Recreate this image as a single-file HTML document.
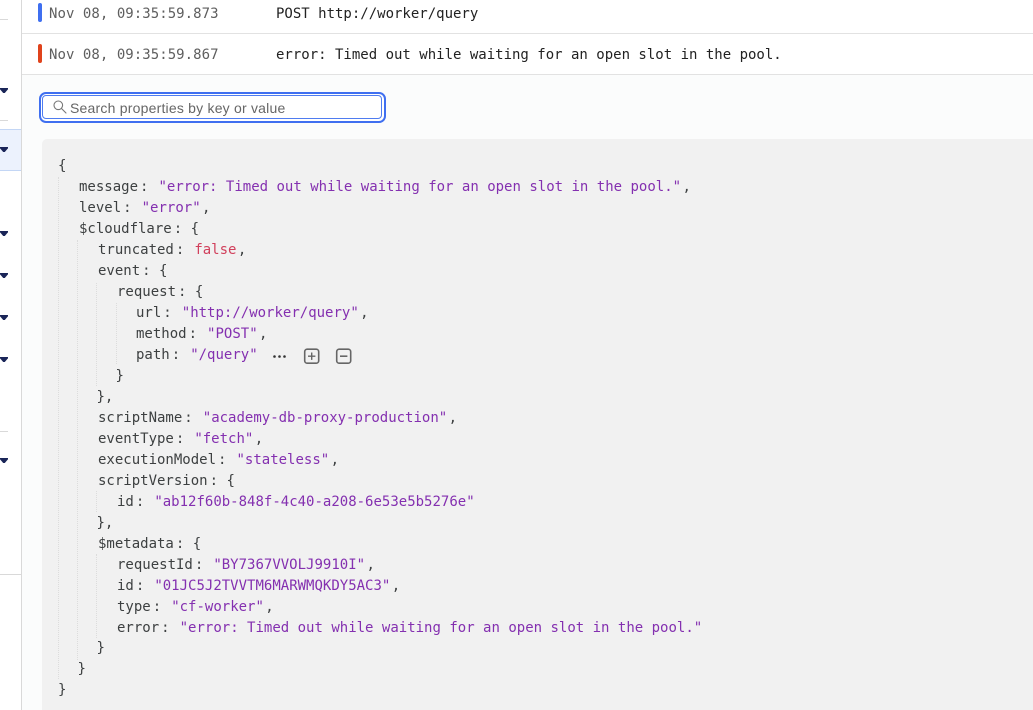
<!DOCTYPE html>
<html>
<head>
<meta charset="utf-8">
<style>
html,body{margin:0;padding:0;width:1033px;height:710px;overflow:hidden;background:#fff}
#a{position:relative;width:1033px;height:710px;overflow:hidden;background:#fff}
#a div{position:absolute}
.l{white-space:pre;font:14px/21px "DejaVu Sans Mono","Liberation Mono",monospace;color:#3d4041}
.l b{font-weight:normal;margin-left:2px}
.s{color:#8430b0;margin-left:1.6px;margin-right:1.4px}
.f{color:#d1405c;margin-left:1.6px;margin-right:1.4px}
.h{left:0;height:1px;background:#d9d9d9}
.c{left:0;width:8px;height:5px;background:#1a2558;clip-path:polygon(0 0,100% 0,100% 25%,60% 100%,40% 100%,0 25%)}
.g{width:0;border-left:1px dotted #dcdcdc}
.r{white-space:pre;font:14px/21px "DejaVu Sans Mono","Liberation Mono",monospace;color:#36393a}
</style>
</head>
<body>
<div id="a">
<!-- sidebar -->
<div style="left:0;top:129px;width:21px;height:42px;background:#ecf2fd;border-top:1px solid #c3d6f5;border-bottom:1px solid #c3d6f5;box-sizing:border-box"></div>
<div style="left:21px;top:0;width:1px;height:710px;background:#d9d9d9"></div>
<div class="h" style="top:19px;width:8px"></div>
<div class="h" style="top:120px;width:8px"></div>
<div class="h" style="top:431px;width:8px"></div>
<div class="h" style="top:574px;width:21px"></div>
<div class="c" style="top:88px"></div>
<div class="c" style="top:147px"></div>
<div class="c" style="top:231px"></div>
<div class="c" style="top:273px"></div>
<div class="c" style="top:315px"></div>
<div class="c" style="top:357px"></div>
<div class="c" style="top:458px"></div>
<!-- rows -->
<div style="left:22px;top:33px;width:1011px;height:1px;background:#e2e2e2"></div>
<div style="left:22px;top:74px;width:1011px;height:1px;background:#e2e2e2"></div>
<div style="left:22px;top:75px;width:1011px;height:635px;background:#fbfcfc"></div>
<div style="left:38px;top:3px;width:4px;height:19px;border-radius:2px;background:#3f6ff0"></div>
<div style="left:38px;top:44px;width:4px;height:19px;border-radius:2px;background:#e0431c"></div>
<div class="r" style="left:49px;top:4px;color:#5e5e5e;letter-spacing:.05px">Nov 08, 09:35:59.873</div>
<div class="r" style="left:49px;top:45px;color:#5e5e5e;letter-spacing:.05px">Nov 08, 09:35:59.867</div>
<div class="r" style="left:276px;top:4px;color:#222">POST http://worker/query</div>
<div class="r" style="left:276px;top:45px;color:#222">error: Timed out while waiting for an open slot in the pool.</div>
<!-- search -->
<div style="left:38.5px;top:91.5px;width:347px;height:31px;box-sizing:border-box;border:2px solid #3f6ff0;border-radius:7px;background:#fff"></div>
<div style="left:42px;top:95px;width:340px;height:24px;box-sizing:border-box;border:1px solid #4f7cf0;border-radius:4px;background:#fff"></div>
<svg style="position:absolute;left:52px;top:99px" width="16" height="16" viewBox="0 0 16 16" fill="none" stroke="#777" stroke-width="1.1"><circle cx="6.3" cy="6.3" r="4.3"/><path d="M9.5 9.5L14 14" stroke-linecap="round"/></svg>
<div style="left:70px;top:98px;font:14px/21px 'Liberation Sans',sans-serif;color:#666;white-space:pre;letter-spacing:.21px">Search properties by key or value</div>
<!-- panel -->
<div style="left:42px;top:139px;width:1000px;height:580px;background:#f1f1f1;border-radius:5px"></div>
<!-- guides -->
<div class="g" style="left:58px;top:177px;height:502px"></div>
<div class="g" style="left:77px;top:240px;height:420px"></div>
<div class="g" style="left:96px;top:283px;height:103px"></div>
<div class="g" style="left:116px;top:303px;height:61px"></div>
<div class="g" style="left:96px;top:491px;height:21px"></div>
<div class="g" style="left:96px;top:554px;height:84px"></div>
<!-- json -->
<div class="l" style="left:58px;top:156px">{</div>
<div class="l" style="left:79px;top:177px">message<b>:</b> <span class="s">"error: Timed out while waiting for an open slot in the pool."</span>,</div>
<div class="l" style="left:79px;top:198px">level<b>:</b> <span class="s">"error"</span>,</div>
<div class="l" style="left:79px;top:219px">$cloudflare<b>:</b> {</div>
<div class="l" style="left:98px;top:240px">truncated<b>:</b> <span class="f">false</span>,</div>
<div class="l" style="left:98px;top:261px">event<b>:</b> {</div>
<div class="l" style="left:117px;top:282px">request<b>:</b> {</div>
<div class="l" style="left:136px;top:303px">url<b>:</b> <span class="s">"http://worker/query"</span>,</div>
<div class="l" style="left:136px;top:324px">method<b>:</b> <span class="s">"POST"</span>,</div>
<div class="l" style="left:136px;top:345px">path<b>:</b> <span class="s">"/query"</span></div>
<div class="l" style="left:115.5px;top:366px">}</div>
<div class="l" style="left:96.5px;top:387px">},</div>
<div class="l" style="left:98px;top:408px">scriptName<b>:</b> <span class="s">"academy-db-proxy-production"</span>,</div>
<div class="l" style="left:98px;top:429px">eventType<b>:</b> <span class="s">"fetch"</span>,</div>
<div class="l" style="left:98px;top:450px">executionModel<b>:</b> <span class="s">"stateless"</span>,</div>
<div class="l" style="left:98px;top:471px">scriptVersion<b>:</b> {</div>
<div class="l" style="left:117px;top:492px">id<b>:</b> <span class="s">"ab12f60b-848f-4c40-a208-6e53e5b5276e"</span></div>
<div class="l" style="left:96.5px;top:513px">},</div>
<div class="l" style="left:98px;top:534px">$metadata<b>:</b> {</div>
<div class="l" style="left:117px;top:555px">requestId<b>:</b> <span class="s">"BY7367VVOLJ9910I"</span>,</div>
<div class="l" style="left:117px;top:576px">id<b>:</b> <span class="s">"01JC5J2TVVTM6MARWMQKDY5AC3"</span>,</div>
<div class="l" style="left:117px;top:597px">type<b>:</b> <span class="s">"cf-worker"</span>,</div>
<div class="l" style="left:117px;top:618px">error<b>:</b> <span class="s">"error: Timed out while waiting for an open slot in the pool."</span></div>
<div class="l" style="left:96.5px;top:638px">}</div>
<div class="l" style="left:77.5px;top:659px">}</div>
<div class="l" style="left:58px;top:680px">}</div>
<!-- actions -->
<svg style="position:absolute;left:272px;top:347px" width="90" height="18" viewBox="0 0 90 18" fill="none">
<circle cx="2.5" cy="9.5" r="1.3" fill="#333"/><circle cx="7.5" cy="9.5" r="1.3" fill="#333"/><circle cx="12.5" cy="9.5" r="1.3" fill="#333"/>
<rect x="32.7" y="2.2" width="14" height="14" rx="2.5" stroke="#666" stroke-width="1.6"/>
<path d="M39.7 5.5v7.4M36 9.2h7.4" stroke="#666" stroke-width="1.4"/>
<rect x="64.7" y="2.2" width="14" height="14" rx="2.5" stroke="#666" stroke-width="1.6"/>
<path d="M68 9.2h7.4" stroke="#666" stroke-width="1.6"/>
</svg>
</div>
</body>
</html>
